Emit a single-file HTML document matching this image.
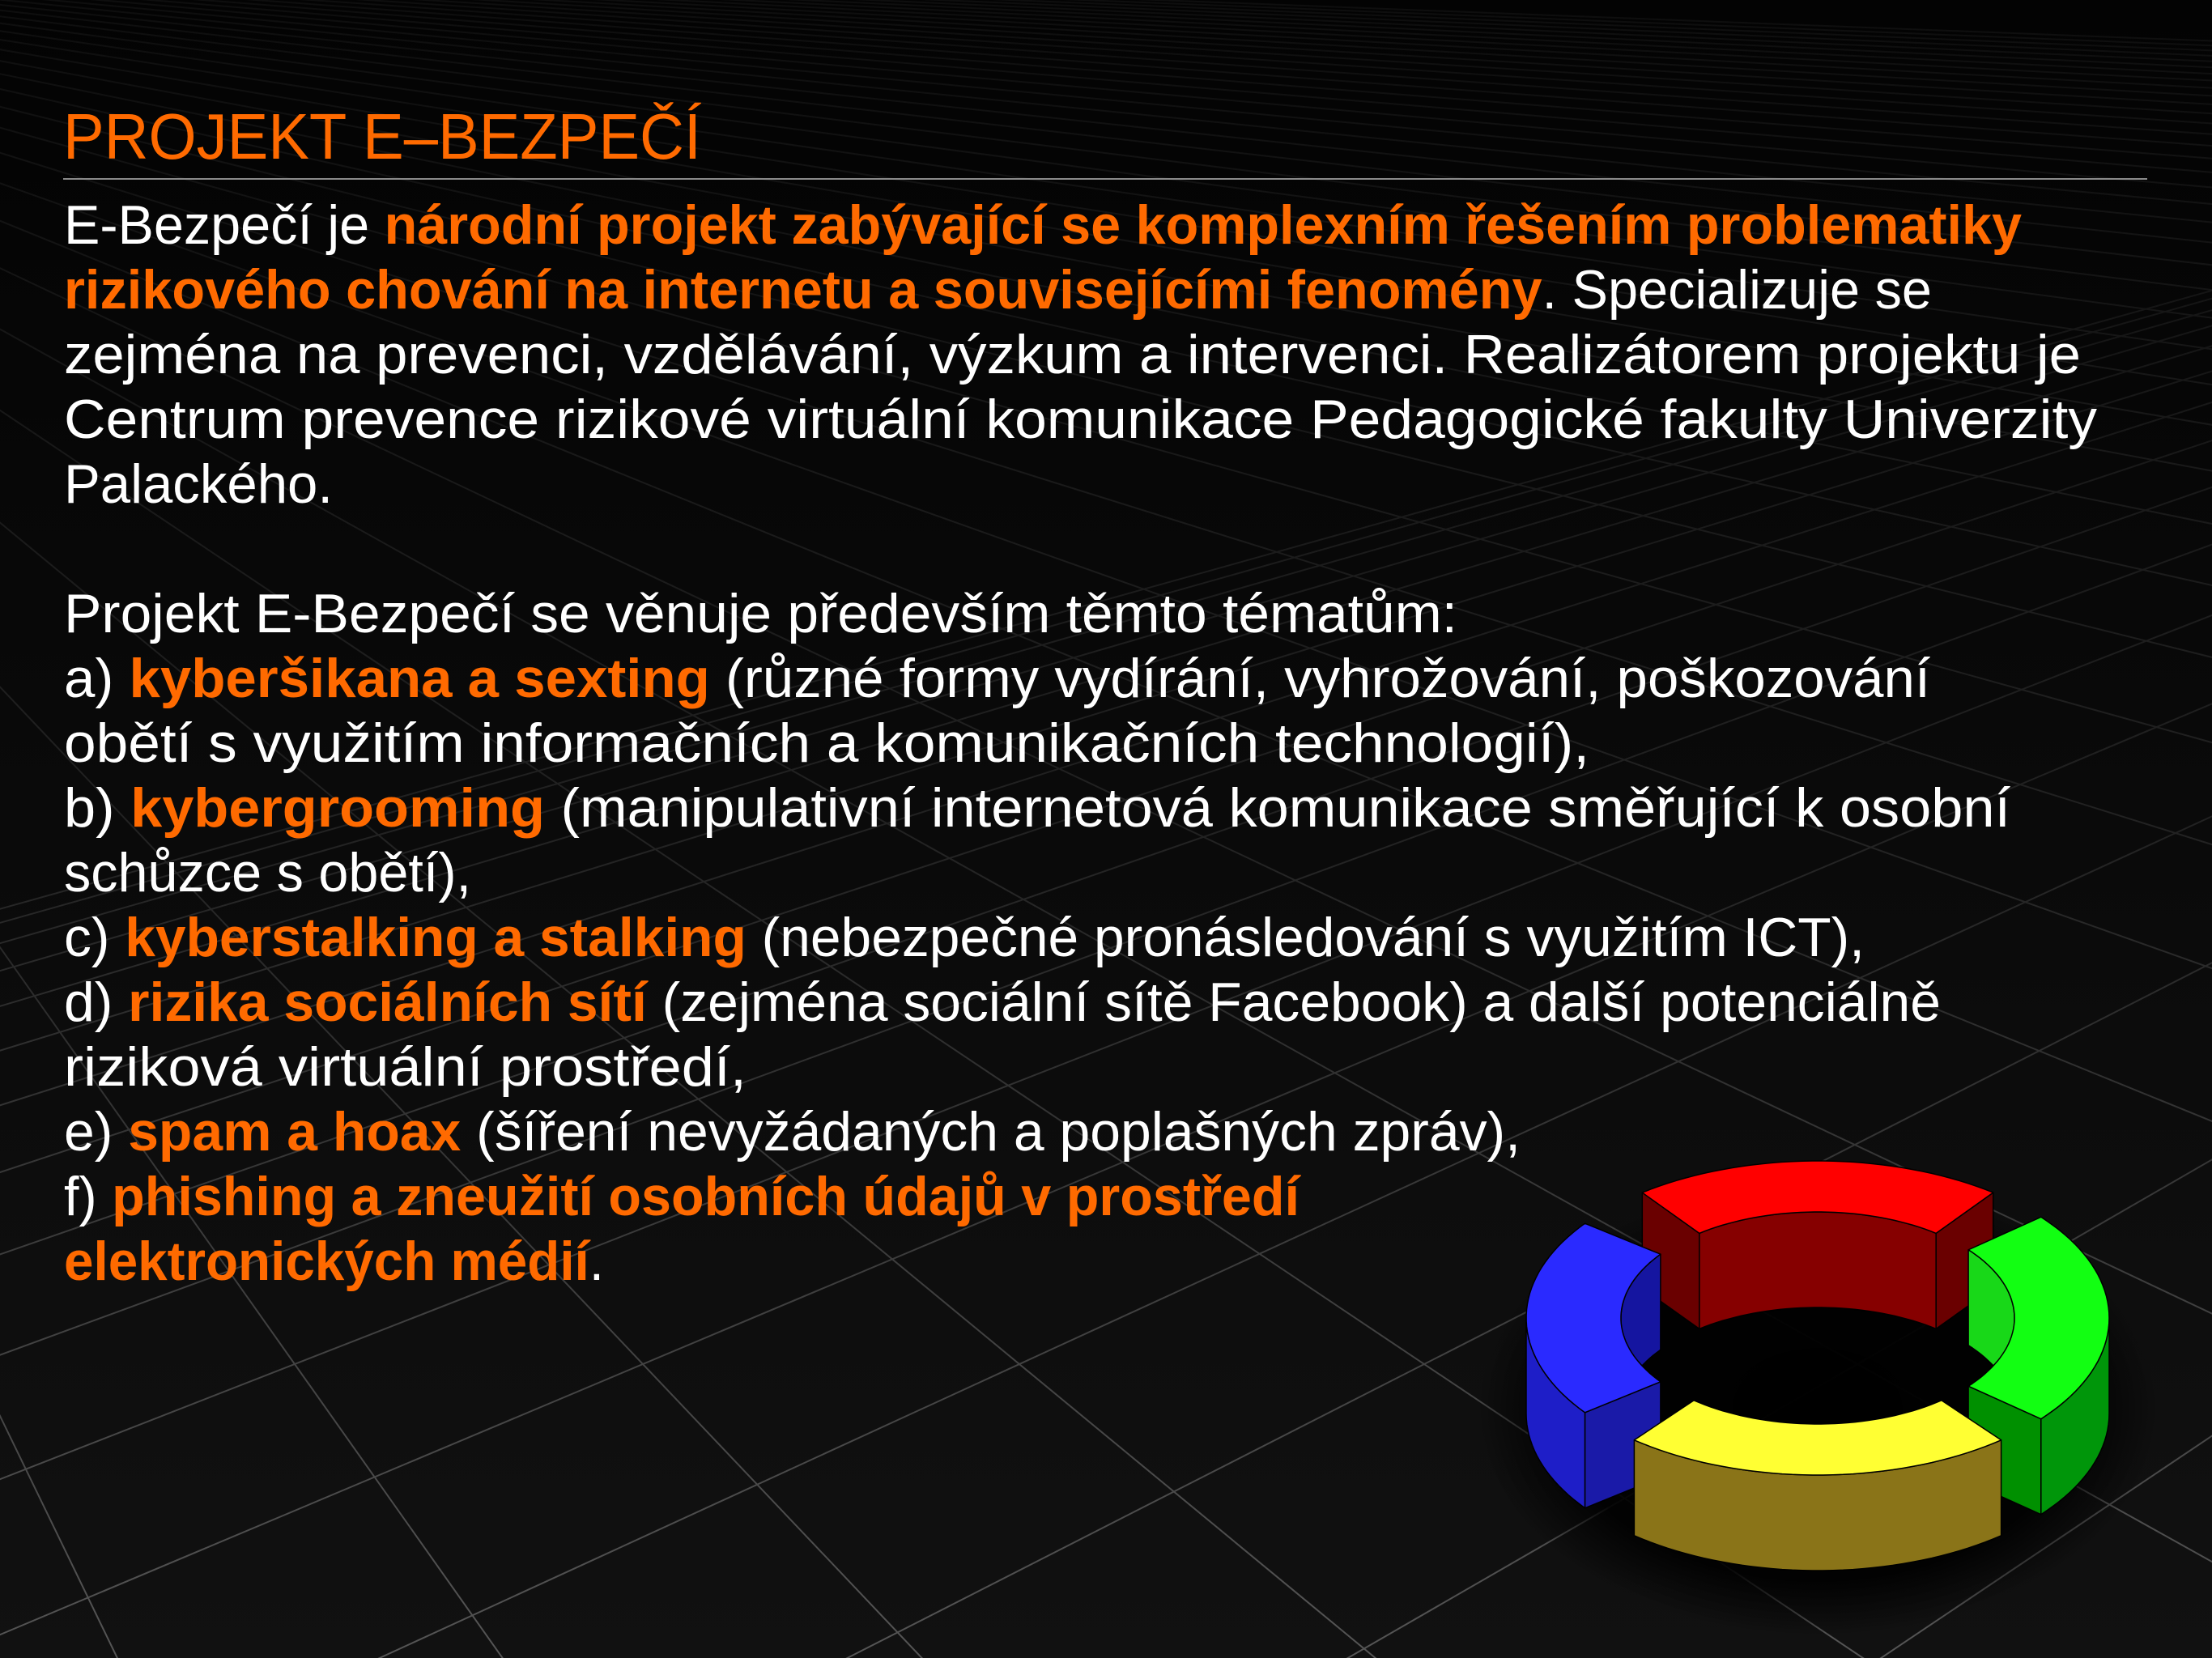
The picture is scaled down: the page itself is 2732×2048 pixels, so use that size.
<!DOCTYPE html>
<html><head><meta charset="utf-8">
<style>
html,body{margin:0;padding:0;background:#0b0b0b;width:2732px;height:2048px;overflow:hidden;}
svg{display:block}
.t{font-family:"Liberation Sans","DejaVu Sans",sans-serif;font-size:68px;fill:#ffffff;}
.o{fill:#ff6a00;font-weight:bold;}
</style></head>
<body>
<svg id="s" width="2732" height="2048" viewBox="0 0 2732 2048" xmlns="http://www.w3.org/2000/svg">
<defs>
<linearGradient id="bg" x1="0" y1="0" x2="0" y2="1">
<stop offset="0" stop-color="#030303"/><stop offset="1" stop-color="#111111"/>
</linearGradient>
<linearGradient id="gl" gradientUnits="userSpaceOnUse" x1="0" y1="0" x2="0" y2="2048">
<stop offset="0" stop-color="#0e0e0e"/><stop offset="0.5" stop-color="#222222"/><stop offset="1" stop-color="#555555"/>
</linearGradient>
<radialGradient id="sh" cx="0.5" cy="0.5" r="0.5">
<stop offset="0" stop-color="#000" stop-opacity="1"/><stop offset="0.75" stop-color="#000" stop-opacity="0.9"/><stop offset="1" stop-color="#000" stop-opacity="0"/>
</radialGradient>
</defs>
<rect width="2732" height="2048" fill="url(#bg)"/>
<g id="grid" stroke="url(#gl)" stroke-width="2" fill="none"></g>
<ellipse cx="2245" cy="1740" rx="420" ry="280" fill="url(#sh)"/>
<g id="ring" stroke="#000" stroke-width="1.5" stroke-linejoin="round"></g>

<text class="t" x="78" y="196" style="font-size:80px;fill:#ff6a00" textLength="788" lengthAdjust="spacingAndGlyphs">PROJEKT E–BEZPEČÍ</text>
<rect x="78" y="220" width="2574" height="2" fill="#8a8a8a"/>

<text class="t" x="79" y="301" textLength="2418" lengthAdjust="spacingAndGlyphs">E-Bezpečí je <tspan class="o">národní projekt zabývající se komplexním řešením problematiky</tspan></text>
<text class="t" x="79" y="381" textLength="2307" lengthAdjust="spacingAndGlyphs"><tspan class="o">rizikového chování na internetu a souvisejícími fenomény</tspan>. Specializuje se</text>
<text class="t" x="79" y="461" textLength="2491" lengthAdjust="spacingAndGlyphs">zejména na prevenci, vzdělávání, výzkum a intervenci. Realizátorem projektu je</text>
<text class="t" x="79" y="541" textLength="2511" lengthAdjust="spacingAndGlyphs">Centrum prevence rizikové virtuální komunikace Pedagogické fakulty Univerzity</text>
<text class="t" x="79" y="621" textLength="332" lengthAdjust="spacingAndGlyphs">Palackého.</text>
<text class="t" x="79" y="781" textLength="1721" lengthAdjust="spacingAndGlyphs">Projekt E-Bezpečí se věnuje především těmto tématům:</text>
<text class="t" x="79" y="861" textLength="2305" lengthAdjust="spacingAndGlyphs">a) <tspan class="o">kyberšikana a sexting</tspan> (různé formy vydírání, vyhrožování, poškozování</text>
<text class="t" x="79" y="941" textLength="1884" lengthAdjust="spacingAndGlyphs">obětí s využitím informačních a komunikačních technologií),</text>
<text class="t" x="79" y="1021" textLength="2404" lengthAdjust="spacingAndGlyphs">b) <tspan class="o">kybergrooming</tspan> (manipulativní internetová komunikace směřující k osobní</text>
<text class="t" x="79" y="1101" textLength="503" lengthAdjust="spacingAndGlyphs">schůzce s obětí),</text>
<text class="t" x="79" y="1181" textLength="2224" lengthAdjust="spacingAndGlyphs">c) <tspan class="o">kyberstalking a stalking</tspan> (nebezpečné pronásledování s využitím ICT),</text>
<text class="t" x="79" y="1261" textLength="2318" lengthAdjust="spacingAndGlyphs">d) <tspan class="o">rizika sociálních sítí</tspan> (zejména sociální sítě Facebook) a další potenciálně</text>
<text class="t" x="79" y="1341" textLength="843" lengthAdjust="spacingAndGlyphs">riziková virtuální prostředí,</text>
<text class="t" x="79" y="1421" textLength="1799" lengthAdjust="spacingAndGlyphs">e) <tspan class="o">spam a hoax</tspan> (šíření nevyžádaných a poplašných zpráv),</text>
<text class="t" x="79" y="1501" textLength="1526" lengthAdjust="spacingAndGlyphs">f) <tspan class="o">phishing a zneužití osobních údajů v prostředí</tspan></text>
<text class="t" x="79" y="1581" textLength="667" lengthAdjust="spacingAndGlyphs"><tspan class="o">elektronických médií</tspan>.</text>
</svg>
<script>
(function(){
var NS="http://www.w3.org/2000/svg";
var g=document.getElementById("grid");
function line(x1,y1,x2,y2){var l=document.createElementNS(NS,"line");l.setAttribute("x1",x1);l.setAttribute("y1",y1);l.setAttribute("x2",x2);l.setAttribute("y2",y2);g.appendChild(l);}
var VA=[-891,-90],VB=[6344,-651],row=1685;
function rx(k){return 364+430*k+17.5*k*(k-1);}
for(var k=-10;k<=40;k++){
  var x=rx(k);
  var dx=x-VA[0],dy=row-VA[1];
  line(VA[0],VA[1],VA[0]+dx*3,VA[1]+dy*3);
  var ex=x-VB[0],ey=row-VB[1];
  line(VB[0],VB[1],VB[0]+ex*3,VB[1]+ey*3);
}
var r=document.getElementById("ring");
var cx=2245,cy=1628,RO=[360,194],RI=[243,131],H=118;
function P(R,t,dy){var a=t*Math.PI/180;return [cx+R[0]*Math.cos(a),cy+R[1]*Math.sin(a)+dy];}
function arc(R,a,b,dy){var p=[],n=Math.max(2,Math.ceil(Math.abs(b-a)/2));for(var i=0;i<=n;i++){p.push(P(R,a+(b-a)*i/n,dy));}return p;}
function path(pts,fill){var d="M"+pts.map(function(q){return q[0].toFixed(1)+","+q[1].toFixed(1);}).join("L")+"Z";var e=document.createElementNS(NS,"path");e.setAttribute("d",d);e.setAttribute("fill",fill);r.appendChild(e);}
function wall(R,a,b,fill){path(arc(R,a,b,0).concat(arc(R,b,a,H)),fill);}
function cut(a,fill){path([P(RO,a,0),P(RI,a,0),P(RI,a,H),P(RO,a,H)],fill);}
function top(a,b,fill){path(arc(RO,a,b,0).concat(arc(RI,b,a,0)),fill);}
wall(RI,-127,-53,"#860000");cut(-127,"#6a0000");cut(-53,"#6a0000");top(-127,-53,"#ff0000");
wall(RI,180,217,"#1515a0");cut(143,"#1a1aa8");wall(RO,143,180,"#1e1ec8");top(143,217,"#2a2aff");
wall(RI,-40,0,"#18d818");cut(40,"#009000");wall(RO,0,40,"#00960a");top(-40,40,"#12ff12");
wall(RO,51,129,"#8a7418");top(51,129,"#ffff33");
})();
</script>
</body></html>
